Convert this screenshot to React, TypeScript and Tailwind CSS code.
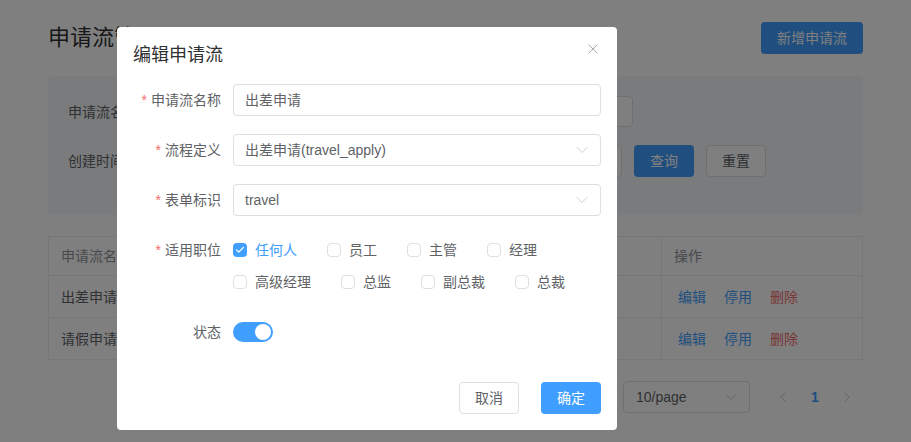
import { X, ChevronDown, ChevronLeft, ChevronRight, Check } from "lucide-react";

const rows = [
  { name: "出差申请", flow: "出差申请(travel_apply)", form: "travel", status: "启用" },
  { name: "请假申请", flow: "请假申请(leave_apply)", form: "leave", status: "启用" },
];

const positions = ["任何人", "员工", "主管", "经理", "高级经理", "总监", "副总裁", "总裁"];

function FormRow({ label, required, children }: { label: string; required?: boolean; children: React.ReactNode }) {
  return (
    <div className="mb-[18px] flex">
      <label className="w-[100px] shrink-0 pr-3 text-right text-sm leading-8 text-[#606266]">
        {required && <span className="mr-1 text-[#f56c6c]">*</span>}
        {label}
      </label>
      <div className="min-w-0 flex-1">{children}</div>
    </div>
  );
}

export default function App() {
  return (
    <div className="relative min-h-screen overflow-hidden bg-white px-12 font-['Liberation_Sans','Noto_Sans_CJK_SC',sans-serif]">
      {/* Page header */}
      <div className="flex items-center justify-between pt-[22px]">
        <h1 className="text-[22px] leading-8 text-[#303133]">申请流管理</h1>
        <button className="h-8 w-[102px] rounded bg-[#409eff] text-sm text-white">新增申请流</button>
      </div>

      {/* Filters */}
      <div className="mt-[22px] h-[139px] rounded bg-[#f5f7fa] px-5 pt-5">
        <div className="flex items-center">
          <span className="w-[92px] text-sm text-[#606266]">申请流名称</span>
          <div className="h-[31px] w-[473px] rounded border border-[#dcdfe6] bg-white" />
        </div>
        <div className="mt-[18px] flex items-center">
          <span className="w-[92px] text-sm text-[#606266]">创建时间</span>
          <div className="h-8 w-[462px] rounded border border-[#dcdfe6] bg-white" />
          <button className="ml-3 h-8 w-[60px] rounded bg-[#409eff] text-sm text-white">查询</button>
          <button className="ml-3 h-8 w-[60px] rounded border border-[#dcdfe6] bg-white text-sm text-[#606266]">重置</button>
        </div>
      </div>

      {/* Table */}
      <div className="mt-[21px] border-l border-t border-[#ebeef5] text-sm">
        <div className="grid h-[39px] grid-cols-[152px_180px_140px_141px_1fr] text-[#909399]">
          {["申请流名称", "流程定义", "表单标识", "状态", "操作"].map((h) => (
            <div key={h} className="flex items-center border-b border-r border-[#ebeef5] px-3">{h}</div>
          ))}
        </div>
        {rows.map((r) => (
          <div key={r.name} className="grid h-[42px] grid-cols-[152px_180px_140px_141px_1fr] text-[#606266]">
            <div className="flex items-center border-b border-r border-[#ebeef5] px-3">{r.name}</div>
            <div className="flex items-center border-b border-r border-[#ebeef5] px-3">{r.flow}</div>
            <div className="flex items-center border-b border-r border-[#ebeef5] px-3">{r.form}</div>
            <div className="flex items-center border-b border-r border-[#ebeef5] px-3">{r.status}</div>
            <div className="flex items-center gap-[18px] border-b border-r border-[#ebeef5] pl-4">
              <span className="text-[#409eff]">编辑</span>
              <span className="text-[#409eff]">停用</span>
              <span className="text-[#f56c6c]">删除</span>
            </div>
          </div>
        ))}
      </div>

      {/* Pagination */}
      <div className="mt-[21px] flex items-center justify-end">
        <div className="flex h-8 w-[127px] items-center justify-between rounded border border-[#dcdfe6] pl-3 pr-2 text-sm text-[#606266]">
          <span>10/page</span>
          <ChevronDown className="h-5 w-5 text-[#c0c4cc]" strokeWidth={1} />
        </div>
        <div className="ml-[17px] flex h-8 w-8 items-center justify-center text-[#c0c4cc]">
          <ChevronLeft className="h-4 w-4" strokeWidth={1.5} />
        </div>
        <div className="flex h-8 w-8 items-center justify-center text-sm font-bold text-[#409eff]">1</div>
        <div className="flex h-8 w-8 items-center justify-center text-[#c0c4cc]">
          <ChevronRight className="h-4 w-4" strokeWidth={1.5} />
        </div>
      </div>

      {/* Dialog overlay */}
      <div className="absolute inset-0 bg-black/50">
        <div className="absolute left-[117px] top-[27px] w-[500px] rounded bg-white">
          <div className="relative px-4 pt-4">
            <h2 className="text-lg leading-6 text-[#303133]">编辑申请流</h2>
            <X className="absolute right-4 top-[14px] h-4 w-4 text-[#909399]" strokeWidth={1.2} />
          </div>

          <div className="px-4 pt-[17px]">
            <FormRow label="申请流名称" required>
              <div className="flex h-8 items-center rounded border border-[#dcdfe6] px-[11px] text-sm text-[#606266]">出差申请</div>
            </FormRow>
            <FormRow label="流程定义" required>
              <div className="flex h-8 items-center justify-between rounded border border-[#dcdfe6] pl-[11px] pr-2 text-sm text-[#606266]">
                <span>出差申请(travel_apply)</span>
                <ChevronDown className="h-5 w-5 text-[#c0c4cc]" strokeWidth={1} />
              </div>
            </FormRow>
            <FormRow label="表单标识" required>
              <div className="flex h-8 items-center justify-between rounded border border-[#dcdfe6] pl-[11px] pr-2 text-sm text-[#606266]">
                <span>travel</span>
                <ChevronDown className="h-5 w-5 text-[#c0c4cc]" strokeWidth={1} />
              </div>
            </FormRow>
            <FormRow label="适用职位" required>
              <div className="flex flex-wrap">
                {positions.map((p, i) => (
                  <div key={p} className="mr-[30px] flex h-8 items-center text-sm">
                    {i === 0 ? (
                      <span className="flex h-[14px] w-[14px] items-center justify-center rounded-sm bg-[#409eff]">
                        <Check className="h-[10px] w-[10px] text-white" strokeWidth={3} />
                      </span>
                    ) : (
                      <span className="h-[14px] w-[14px] rounded-sm border border-[#dcdfe6] bg-white" />
                    )}
                    <span className={`ml-2 ${i === 0 ? "text-[#409eff]" : "text-[#606266]"}`}>{p}</span>
                  </div>
                ))}
              </div>
            </FormRow>
            <FormRow label="状态">
              <div className="flex h-8 items-center">
                <div className="flex h-5 w-10 items-center justify-end rounded-full bg-[#409eff] px-[2px]">
                  <span className="h-4 w-4 rounded-full bg-white" />
                </div>
              </div>
            </FormRow>
          </div>

          <div className="flex justify-end gap-[22px] px-4 pb-4 pt-4">
            <button className="h-8 w-[60px] rounded border border-[#dcdfe6] bg-white text-sm text-[#606266]">取消</button>
            <button className="h-8 w-[60px] rounded bg-[#409eff] text-sm text-white">确定</button>
          </div>
        </div>
      </div>
    </div>
  );
}
